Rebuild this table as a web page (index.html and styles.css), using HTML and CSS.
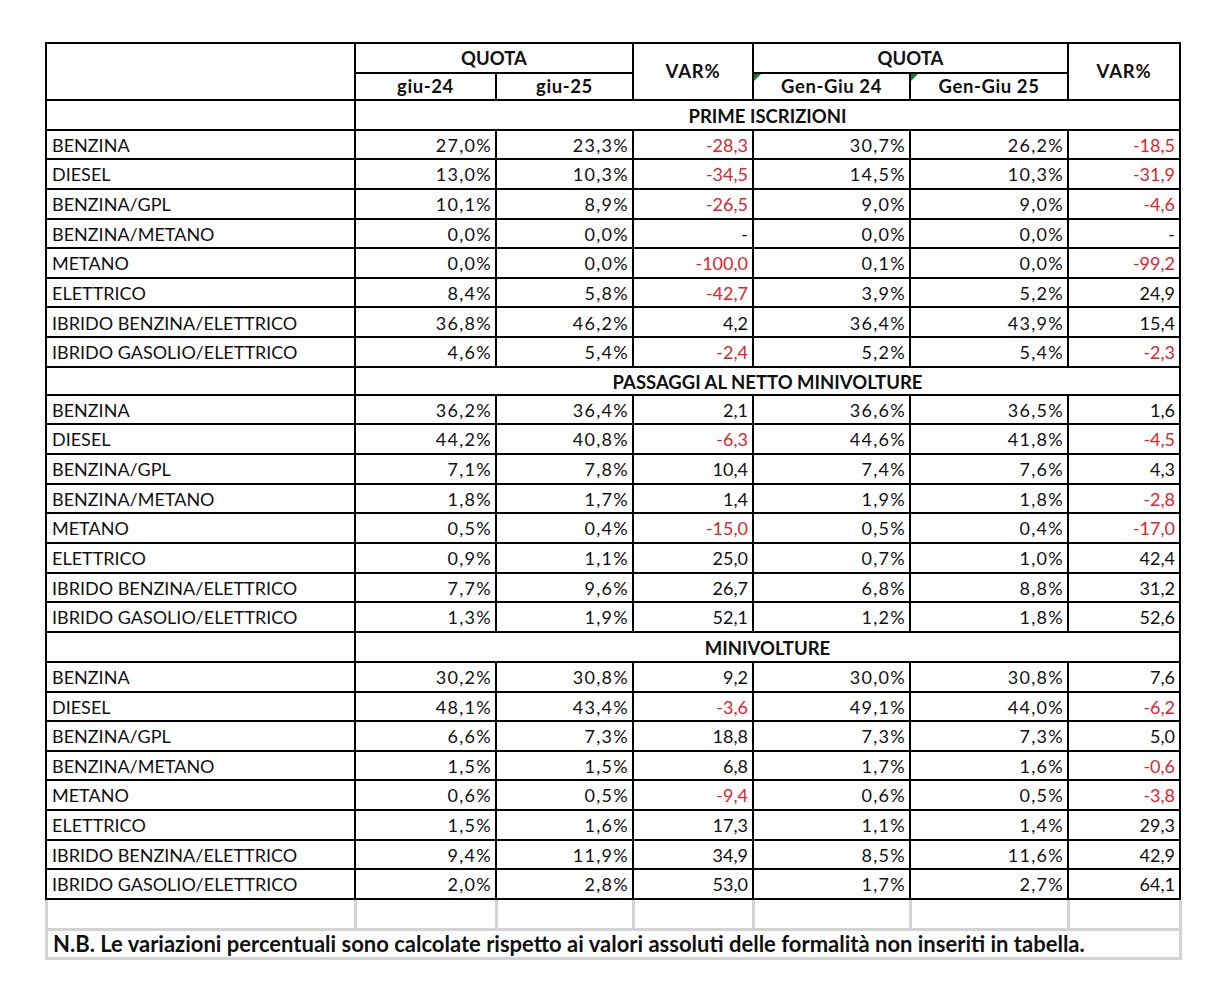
FILE: index.html
```html
<!DOCTYPE html>
<html lang="it">
<head>
<meta charset="utf-8">
<title>Quote alimentazione</title>
<link rel="stylesheet" href="styles.css">
</head>
<body>
<div class="page">
<table class="grid">
  <colgroup>
    <col class="c-label"><col class="c-q1"><col class="c-q2"><col class="c-v1"><col class="c-q3"><col class="c-q4"><col class="c-v2">
  </colgroup>
  <thead>
    <tr class="h1">
      <th rowspan="2"></th>
      <th colspan="2">QUOTA</th>
      <th rowspan="2" class="var">VAR%</th>
      <th colspan="2">QUOTA</th>
      <th rowspan="2" class="var">VAR%</th>
    </tr>
    <tr class="h2">
      <th>giu-24</th>
      <th>giu-25</th>
      <th class="flag">Gen-Giu 24</th>
      <th class="flag">Gen-Giu 25</th>
    </tr>
  </thead>
  <tbody>
    <tr class="sec"><td></td><td colspan="6">PRIME ISCRIZIONI</td></tr>
    <tr><td>BENZINA</td><td>27,0%</td><td>23,3%</td><td class="neg">-28,3</td><td>30,7%</td><td>26,2%</td><td class="neg">-18,5</td></tr>
    <tr><td>DIESEL</td><td>13,0%</td><td>10,3%</td><td class="neg">-34,5</td><td>14,5%</td><td>10,3%</td><td class="neg">-31,9</td></tr>
    <tr><td>BENZINA/GPL</td><td>10,1%</td><td>8,9%</td><td class="neg">-26,5</td><td>9,0%</td><td>9,0%</td><td class="neg">-4,6</td></tr>
    <tr><td>BENZINA/METANO</td><td>0,0%</td><td>0,0%</td><td>-</td><td>0,0%</td><td>0,0%</td><td>-</td></tr>
    <tr><td>METANO</td><td>0,0%</td><td>0,0%</td><td class="neg">-100,0</td><td>0,1%</td><td>0,0%</td><td class="neg">-99,2</td></tr>
    <tr><td>ELETTRICO</td><td>8,4%</td><td>5,8%</td><td class="neg">-42,7</td><td>3,9%</td><td>5,2%</td><td>24,9</td></tr>
    <tr><td>IBRIDO BENZINA/ELETTRICO</td><td>36,8%</td><td>46,2%</td><td>4,2</td><td>36,4%</td><td>43,9%</td><td>15,4</td></tr>
    <tr><td>IBRIDO GASOLIO/ELETTRICO</td><td>4,6%</td><td>5,4%</td><td class="neg">-2,4</td><td>5,2%</td><td>5,4%</td><td class="neg">-2,3</td></tr>
    <tr class="sec sec2"><td></td><td colspan="6">PASSAGGI AL NETTO MINIVOLTURE</td></tr>
    <tr><td>BENZINA</td><td>36,2%</td><td>36,4%</td><td>2,1</td><td>36,6%</td><td>36,5%</td><td>1,6</td></tr>
    <tr><td>DIESEL</td><td>44,2%</td><td>40,8%</td><td class="neg">-6,3</td><td>44,6%</td><td>41,8%</td><td class="neg">-4,5</td></tr>
    <tr><td>BENZINA/GPL</td><td>7,1%</td><td>7,8%</td><td>10,4</td><td>7,4%</td><td>7,6%</td><td>4,3</td></tr>
    <tr><td>BENZINA/METANO</td><td>1,8%</td><td>1,7%</td><td>1,4</td><td>1,9%</td><td>1,8%</td><td class="neg">-2,8</td></tr>
    <tr><td>METANO</td><td>0,5%</td><td>0,4%</td><td class="neg">-15,0</td><td>0,5%</td><td>0,4%</td><td class="neg">-17,0</td></tr>
    <tr><td>ELETTRICO</td><td>0,9%</td><td>1,1%</td><td>25,0</td><td>0,7%</td><td>1,0%</td><td>42,4</td></tr>
    <tr><td>IBRIDO BENZINA/ELETTRICO</td><td>7,7%</td><td>9,6%</td><td>26,7</td><td>6,8%</td><td>8,8%</td><td>31,2</td></tr>
    <tr><td>IBRIDO GASOLIO/ELETTRICO</td><td>1,3%</td><td>1,9%</td><td>52,1</td><td>1,2%</td><td>1,8%</td><td>52,6</td></tr>
    <tr class="sec sec3"><td></td><td colspan="6">MINIVOLTURE</td></tr>
    <tr><td>BENZINA</td><td>30,2%</td><td>30,8%</td><td>9,2</td><td>30,0%</td><td>30,8%</td><td>7,6</td></tr>
    <tr><td>DIESEL</td><td>48,1%</td><td>43,4%</td><td class="neg">-3,6</td><td>49,1%</td><td>44,0%</td><td class="neg">-6,2</td></tr>
    <tr><td>BENZINA/GPL</td><td>6,6%</td><td>7,3%</td><td>18,8</td><td>7,3%</td><td>7,3%</td><td>5,0</td></tr>
    <tr><td>BENZINA/METANO</td><td>1,5%</td><td>1,5%</td><td>6,8</td><td>1,7%</td><td>1,6%</td><td class="neg">-0,6</td></tr>
    <tr><td>METANO</td><td>0,6%</td><td>0,5%</td><td class="neg">-9,4</td><td>0,6%</td><td>0,5%</td><td class="neg">-3,8</td></tr>
    <tr><td>ELETTRICO</td><td>1,5%</td><td>1,6%</td><td>17,3</td><td>1,1%</td><td>1,4%</td><td>29,3</td></tr>
    <tr><td>IBRIDO BENZINA/ELETTRICO</td><td>9,4%</td><td>11,9%</td><td>34,9</td><td>8,5%</td><td>11,6%</td><td>42,9</td></tr>
    <tr><td>IBRIDO GASOLIO/ELETTRICO</td><td>2,0%</td><td>2,8%</td><td>53,0</td><td>1,7%</td><td>2,7%</td><td>64,1</td></tr>
  </tbody>
</table>
<table class="foot">
  <colgroup>
    <col class="c-label"><col class="c-q1"><col class="c-q2"><col class="c-v1"><col class="c-q3"><col class="c-q4"><col class="c-v2">
  </colgroup>
  <tr class="blank"><td></td><td></td><td></td><td></td><td></td><td></td><td></td></tr>
  <tr class="note"><td colspan="7">N.B. Le variazioni percentuali sono calcolate rispetto ai valori assoluti delle formalità non inseriti in tabella.</td></tr>
</table>
</div>
</body>
</html>
```

FILE: styles.css
```css
html, body {
  margin: 0;
  padding: 0;
  background: #ffffff;
}

body {
  font-family: Lato, "Liberation Sans", sans-serif;
  font-size: 18px;
  line-height: 1.2;
  color: #111111;
}

.page {
  padding: 42px 0 0 45px;
}

table {
  border-collapse: collapse;
  table-layout: fixed;
  width: 1134px;
}

.c-label { width: 309px; }
.c-q1 { width: 141px; }
.c-q2 { width: 137px; }
.c-v1 { width: 120px; }
.c-q3 { width: 157px; }
.c-q4 { width: 158px; }
.c-v2 { width: 112px; }

.grid th,
.grid td {
  border: 2px solid #000000;
  padding: 0 4px;
  white-space: nowrap;
  overflow: hidden;
}

.grid th {
  font-weight: 700;
  font-size: 18.5px;
  text-align: center;
}

.h1 th { height: 28px; }
.h2 th {
  height: 25px;
  letter-spacing: 0.6px;
}

.grid th.var {
  letter-spacing: 0.8px;
}

.grid tbody tr { height: 29.65px; }

.grid tbody td {
  text-align: right;
  padding: 2px 4px 0 4px;
}

.grid tbody tr:not(.sec) td:nth-child(2),
.grid tbody tr:not(.sec) td:nth-child(3),
.grid tbody tr:not(.sec) td:nth-child(5),
.grid tbody tr:not(.sec) td:nth-child(6) {
  letter-spacing: 1.3px;
  padding-right: 3px;
}

.grid tbody td:first-child {
  text-align: left;
  padding-left: 5px;
}

.grid tbody .sec td {
  text-align: center;
  font-weight: 700;
  font-size: 18.5px;
}

.grid tbody tr.sec2 { height: 28px; }
.grid tbody tr.sec3 { height: 30px; }

.grid .neg {
  color: #e0242c;
}

.flag {
  position: relative;
}

.flag::before {
  content: "";
  position: absolute;
  left: 0;
  top: 0;
  width: 0;
  height: 0;
  border-top: 7px solid #1f7a23;
  border-right: 7px solid transparent;
}

.foot td {
  border: 3px solid #d3d3d3;
  padding: 0 5px;
  white-space: nowrap;
}

.foot .blank td {
  height: 28px;
  border-top: none;
}

.foot .note td {
  height: 24px;
  font-weight: 700;
  font-size: 22px;
  padding-top: 0;
}
```
